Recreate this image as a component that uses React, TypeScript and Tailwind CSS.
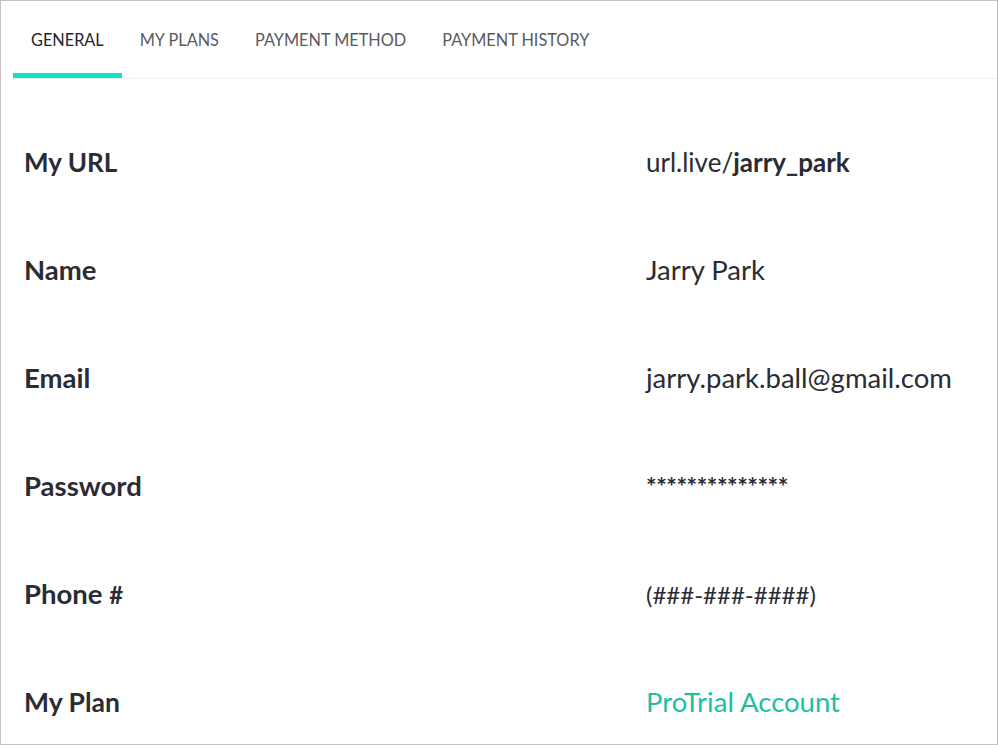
const tabs = ['General', 'My Plans', 'Payment Method', 'Payment History']

const rows: { label: React.ReactNode; value: React.ReactNode }[] = [
  {
    label: <span className="text-[26px]">My URL</span>,
    value: (
      <span className="text-[26px]">
        url.live/<span className="font-bold">jarry_park</span>
      </span>
    ),
  },
  { label: 'Name', value: 'Jarry Park' },
  { label: 'Email', value: 'jarry.park.ball@gmail.com' },
  { label: 'Password', value: <span className="text-[25px] font-bold tracking-[-0.5px]">**************</span> },
  {
    label: (
      <>
        Phone <span className="text-[24px]">#</span>
      </>
    ),
    value: <span className="text-[24px]">(###-###-####)</span>,
  },
  { label: <span className="text-[26.5px]">My Plan</span>, value: <span className="text-[#1dbf9f]">ProTrial Account</span> },
]

export default function App() {
  return (
    <div
      className="w-[998px] h-[745px] bg-white border border-[#c3c3c3] overflow-hidden text-[#2b2b33]"
      style={{ fontFamily: 'Lato, "Open Sans", sans-serif' }}
    >
      <div className="ml-[12px] flex border-b border-[#eeeef6] h-[78px]">
        {tabs.map((t, i) => (
          <div
            key={t}
            className={`px-[18px] h-full flex items-center uppercase text-[16.3px] border-b-[5px] ${
              i === 0 ? 'border-[#0ee3c6] text-[#25252d]' : 'border-transparent text-[#5a5a62]'
            }`}
          >
            <span className="pt-[6px]">{t}</span>
          </div>
        ))}
      </div>
      <div className="pt-[29px] pl-[23px]">
        {rows.map((r, i) => (
          <div key={i} className="grid grid-cols-[622px_1fr] h-[108px] items-center text-[27.5px] leading-none">
            <div className="font-bold">{r.label}</div>
            <div>{r.value}</div>
          </div>
        ))}
      </div>
    </div>
  )
}
